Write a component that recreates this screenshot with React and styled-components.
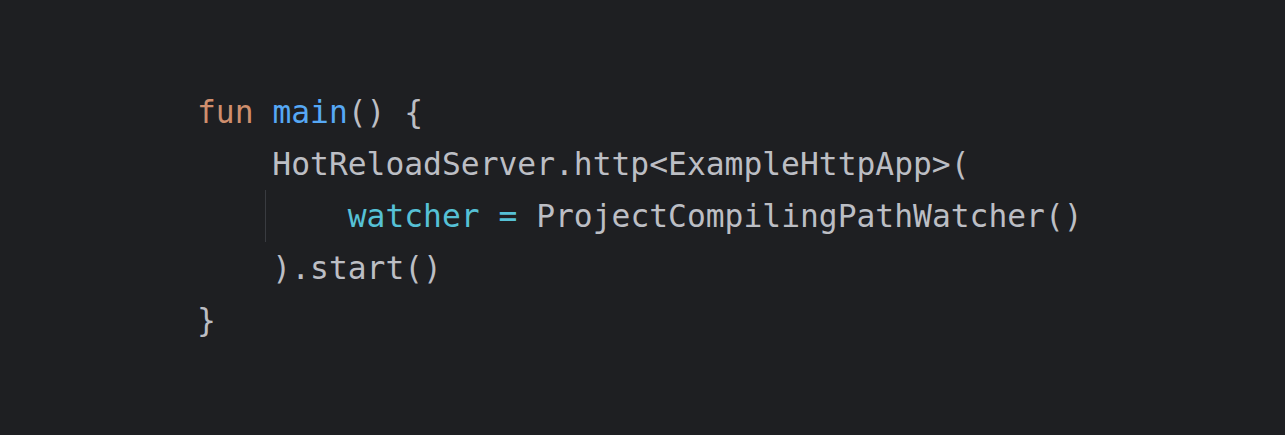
import React from "react";
import styled, { createGlobalStyle } from "styled-components";

const GlobalStyle = createGlobalStyle`
  html, body {
    margin: 0;
    padding: 0;
    background: #1e1f22;
  }
`;

const Editor = styled.div`
  width: 1285px;
  height: 435px;
  box-sizing: border-box;
  padding: 86px 0 0 197px;
  background: #1e1f22;
  font-family: "DejaVu Sans Mono", "Liberation Mono", monospace;
  font-size: 31.3px;
  line-height: 52px;
  color: #bcbec4;
  overflow: hidden;
`;

const Line = styled.div`
  position: relative;
  white-space: pre;
  height: 52px;
`;

const Guide = styled.span`
  position: absolute;
  left: 68px;
  top: 0;
  bottom: 0;
  width: 1px;
  background: #393b40;
`;

const Token = styled.span`
  color: ${({ $kind }) =>
    ({
      keyword: "#cf8e6d",
      fn: "#56a8f5",
      param: "#56c1d6",
    }[$kind] || "#bcbec4")};
`;

export default function App() {
  return (
    <>
      <GlobalStyle />
      <Editor>
        <Line>
          <Token $kind="keyword">fun</Token> <Token $kind="fn">main</Token>() {"{"}
        </Line>
        <Line>{"    HotReloadServer.http<ExampleHttpApp>("}</Line>
        <Line>
          <Guide />
          {"        "}
          <Token $kind="param">watcher</Token> <Token $kind="param">=</Token>{" "}
          ProjectCompilingPathWatcher()
        </Line>
        <Line>{"    ).start()"}</Line>
        <Line>{"}"}</Line>
      </Editor>
    </>
  );
}
